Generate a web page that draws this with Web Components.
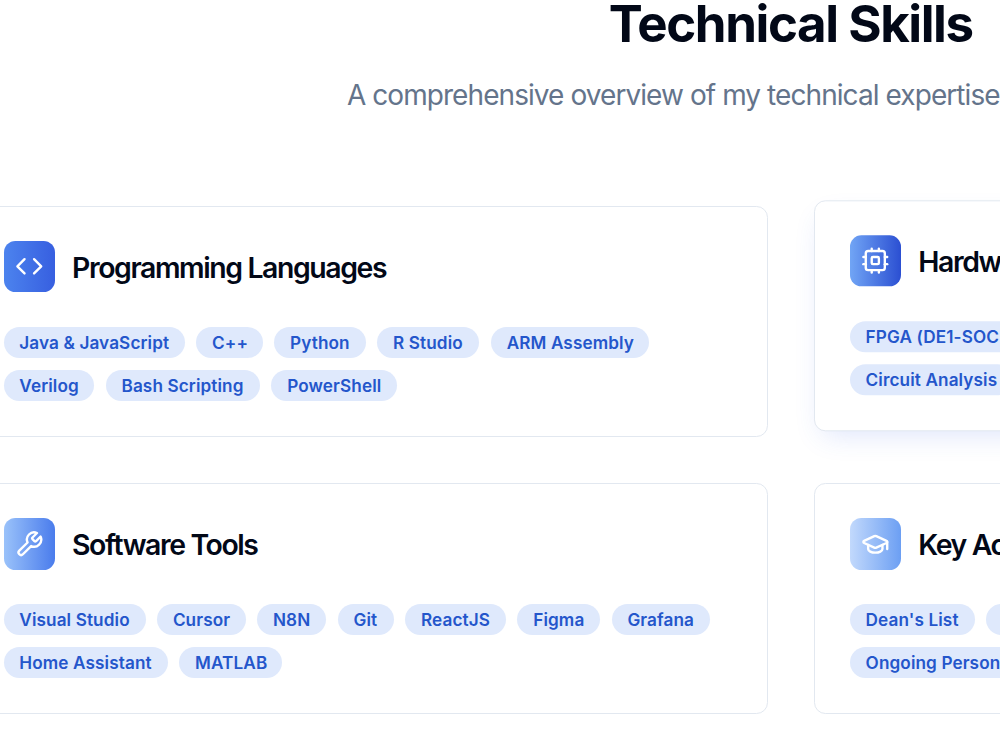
<!DOCTYPE html>
<html lang="en">
<head>
<meta charset="UTF-8">
<title>Technical Skills</title>
<style>
	body {
		margin: 0;
		width: 1000px;
		height: 750px;
		overflow: hidden;
		background: #fff;
		color: #020817;
		font-family: Inter, "Liberation Sans", sans-serif;
	}
</style>
</head>
<body>
<skills-section>
	<span slot="title">Technical Skills</span>
	<span slot="subtitle">A comprehensive overview of my technical expertise</span>
	<skill-card icon="code" from="#4c83ee" to="#375fe0">
		<span slot="title">Programming Languages</span>
		<skill-tag style="--w:181.4px">Java &amp; JavaScript</skill-tag>
		<skill-tag style="--w:66.6px">C++</skill-tag>
		<skill-tag style="--w:91.6px">Python</skill-tag>
		<skill-tag style="--w:102.2px">R Studio</skill-tag>
		<skill-tag style="--w:158px">ARM Assembly</skill-tag>
		<skill-tag style="--w:90.8px">Verilog</skill-tag>
		<skill-tag style="--w:154.4px">Bash Scripting</skill-tag>
		<skill-tag style="--w:125.6px">PowerShell</skill-tag>
	</skill-card>
	<skill-card icon="cpu" from="#71a5f5" to="#2b4fd2" raised>
		<span slot="title">Hardw</span>
		<skill-tag style="--w:185px">FPGA (DE1-SOC</skill-tag>
		<skill-tag style="--w:400px"></skill-tag>
		<skill-tag style="--w:163px">Circuit Analysis</skill-tag>
	</skill-card>
	<skill-card icon="wrench" from="#9ac2fa" to="#4a7cec">
		<span slot="title">Software Tools</span>
		<skill-tag style="--w:142.2px">Visual Studio</skill-tag>
		<skill-tag style="--w:88.7px">Cursor</skill-tag>
		<skill-tag style="--w:69.2px">N8N</skill-tag>
		<skill-tag style="--w:56px">Git</skill-tag>
		<skill-tag style="--w:100.9px">ReactJS</skill-tag>
		<skill-tag style="--w:82.8px">Figma</skill-tag>
		<skill-tag style="--w:98px">Grafana</skill-tag>
		<skill-tag style="--w:164.4px">Home Assistant</skill-tag>
		<skill-tag style="--w:103px">MATLAB</skill-tag>
	</skill-card>
	<skill-card icon="cap" from="#c2d9fc" to="#6c9ff3">
		<span slot="title">Key Ac</span>
		<skill-tag style="--w:125.3px">Dean's List</skill-tag>
		<skill-tag style="--w:500px"></skill-tag>
		<skill-tag style="--w:250px">Ongoing Person</skill-tag>
	</skill-card>
</skills-section>

<script>
const ICONS = {
	code: '<path d="m16 18 6-6-6-6"/><path d="m8 6-6 6 6 6"/>',
	cpu: `<rect width="16" height="16" x="4" y="4" rx="2"/><rect width="6" height="6" x="9" y="9" rx="1"/>
		<path d="M15 2v2"/><path d="M15 20v2"/><path d="M2 15h2"/><path d="M2 9h2"/>
		<path d="M20 15h2"/><path d="M20 9h2"/><path d="M9 2v2"/><path d="M9 20v2"/>`,
	wrench: '<path d="M14.7 6.3a1 1 0 0 0 0 1.4l1.6 1.6a1 1 0 0 0 1.4 0l3.77-3.77a6 6 0 0 1-7.94 7.94l-6.91 6.91a2.12 2.12 0 0 1-3-3l6.91-6.91a6 6 0 0 1 7.94-7.94l-3.76 3.76z"/>',
	cap: `<path d="M21.42 10.922a1 1 0 0 0-.019-1.838L12.83 5.18a2 2 0 0 0-1.66 0L2.6 9.08a1 1 0 0 0 0 1.832l8.57 3.908a2 2 0 0 0 1.66 0z"/>
		<path d="M22 10v6"/><path d="M6 12.5V16a6 3 0 0 0 12 0v-3.5"/>`
};

class SkillsSection extends HTMLElement {
	constructor() {
		super();
		this.attachShadow({ mode: 'open' }).innerHTML = `
			<style>
				:host {
					display: block;
					width: 1646px;
					margin-left: -32.1px;
				}
				header {
					display: flex;
					flex-direction: column;
					align-items: flex-start;
				}
				h1 {
					margin: 0 0 0 640.8px;
					font-size: 51px;
					line-height: 48px;
					font-weight: 700;
					letter-spacing: -0.028em;
					white-space: nowrap;
				}
				p {
					margin: 27px 0 0 379px;
					font-size: 28px;
					line-height: 40px;
					color: #64748b;
					letter-spacing: -0.93px;
					white-space: nowrap;
				}
				.grid {
					display: grid;
					grid-template-columns: 800px 800px;
					gap: 46.3px;
					margin-top: 90.5px;
				}
			</style>
			<header>
				<h1><slot name="title"></slot></h1>
				<p><slot name="subtitle"></slot></p>
			</header>
			<div class="grid"><slot></slot></div>
		`;
	}
}

class SkillCard extends HTMLElement {
	constructor() {
		super();
		this.attachShadow({ mode: 'open' });
	}

	connectedCallback() {
		const from = this.getAttribute('from');
		const to = this.getAttribute('to');
		this.shadowRoot.innerHTML = `
			<style>
				:host {
					display: block;
					box-sizing: border-box;
					height: 231px;
					padding: 34.6px;
					border: 1px solid #e2e8f0;
					border-radius: 11.4px;
					background: #fff;
				}
				:host([raised]) {
					transform: translateY(-5.7px);
					box-shadow: 0 11px 28px -9px rgba(59, 102, 235, 0.18);
				}
				.head {
					display: flex;
					align-items: center;
					gap: 17.1px;
					margin-bottom: 34.3px;
				}
				.icon {
					display: grid;
					place-items: center;
					width: 51.4px;
					height: 51.4px;
					border-radius: 11.4px;
					background: linear-gradient(to right, ${from}, ${to});
				}
				svg {
					width: 28.6px;
					height: 28.6px;
				}
				h3 {
					margin: 0;
					padding-top: 2px;
					font-size: 28.4px;
					line-height: 40px;
					font-weight: 600;
					letter-spacing: -0.049em;
					white-space: nowrap;
				}
				.tags {
					display: flex;
					flex-wrap: wrap;
					gap: 11.5px 11.4px;
				}
			</style>
			<div class="head">
				<div class="icon">
					<svg viewBox="0 0 24 24" fill="none" stroke="#fff" stroke-width="2" stroke-linecap="round" stroke-linejoin="round">${ICONS[this.getAttribute('icon')]}</svg>
				</div>
				<h3><slot name="title"></slot></h3>
			</div>
			<div class="tags"><slot></slot></div>
		`;
	}
}

class SkillTag extends HTMLElement {
	constructor() {
		super();
		this.attachShadow({ mode: 'open' }).innerHTML = `
			<style>
				:host {
					display: block;
					box-sizing: border-box;
					width: var(--w);
					height: 31.4px;
					padding-left: 15.8px;
					border-radius: 16px;
					background: #dfe9fc;
					color: #2456cb;
					font-size: 17.15px;
					line-height: 31.8px;
					font-weight: 600;
					letter-spacing: 0.12px;
					white-space: nowrap;
				}
			</style>
			<slot></slot>
		`;
	}
}

customElements.define('skill-tag', SkillTag);
customElements.define('skill-card', SkillCard);
customElements.define('skills-section', SkillsSection);
</script>
</body>
</html>
